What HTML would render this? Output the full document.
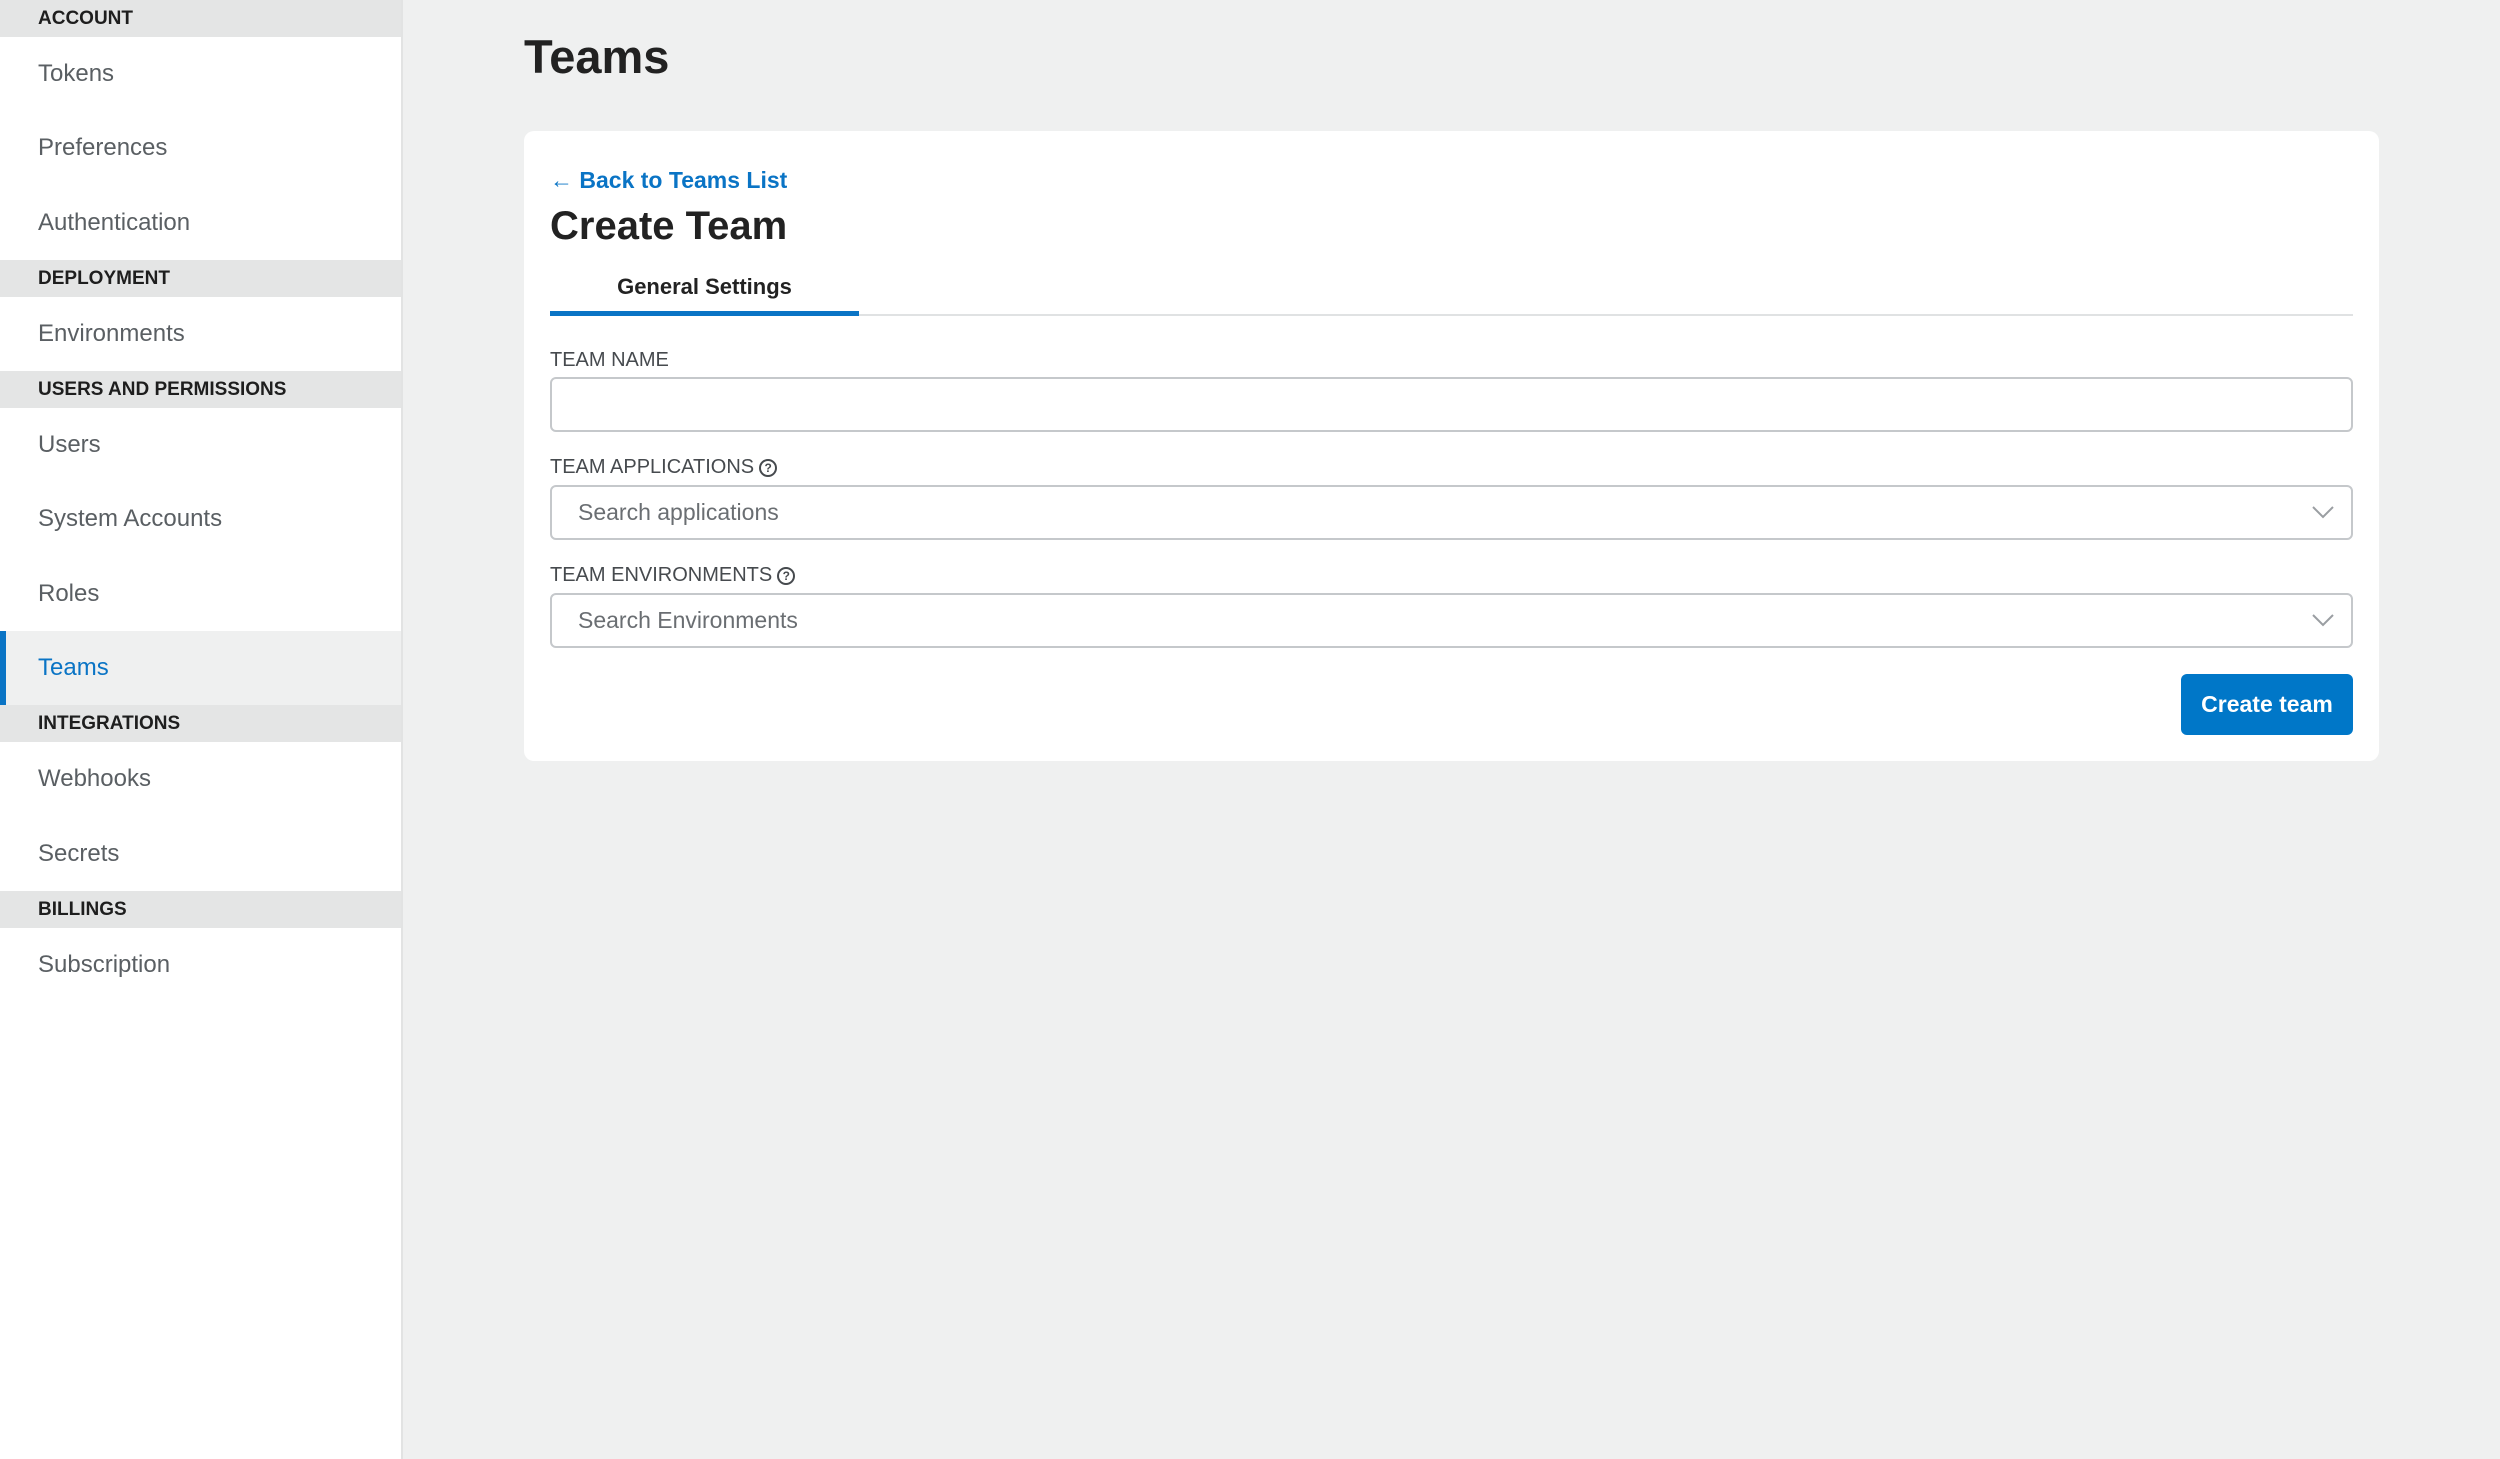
<!DOCTYPE html>
<html><head><meta charset="utf-8"><style>
*{box-sizing:border-box;margin:0;padding:0}
body{width:2500px;height:1459px;background:#eff0f0;font-family:"Liberation Sans",sans-serif;position:relative;overflow:hidden}
.sb{position:absolute;left:0;top:0;width:403px;height:1459px;background:#fff;border-right:2px solid #e2e3e3}
.h{height:37px;background:#e4e5e5;color:#1e1e1e;font-weight:bold;font-size:19px;line-height:37px;padding-left:38px}
.i{height:74.3px;line-height:74.3px;font-size:24px;color:#5a5f63;padding-left:38px}
.i.a{background:#eff0f0;color:#0a74c5;border-left:6px solid #0a74c5;padding-left:32px}
.abs{position:absolute}
.lbl{position:absolute;left:550px;font-size:20px;color:#464a4e;line-height:24px}
.box{position:absolute;left:550px;width:1803px;height:55px;border:2px solid #c5c8cb;border-radius:6px;background:#fff}
.ph{position:absolute;left:26px;top:0;line-height:51px;font-size:23px;color:#6a6e72}
.q{display:inline-block;width:18px;height:18px;border:2px solid #464a4e;border-radius:50%;font-size:12px;font-weight:bold;text-align:center;line-height:14px;vertical-align:1px;margin-left:5px}
</style></head><body>
<div class="sb">
<div class="h">ACCOUNT</div>
<div class="i">Tokens</div><div class="i">Preferences</div><div class="i">Authentication</div>
<div class="h">DEPLOYMENT</div>
<div class="i">Environments</div>
<div class="h">USERS AND PERMISSIONS</div>
<div class="i">Users</div><div class="i">System Accounts</div><div class="i">Roles</div><div class="i a">Teams</div>
<div class="h">INTEGRATIONS</div>
<div class="i">Webhooks</div><div class="i">Secrets</div>
<div class="h">BILLINGS</div>
<div class="i">Subscription</div>
</div>
<div class="abs" style="left:524px;top:30px;font-size:47px;font-weight:bold;color:#222;line-height:54px">Teams</div>
<div class="abs" style="left:524px;top:131px;width:1855px;height:630px;background:#fff;border-radius:10px"></div>
<div class="abs" style="left:550px;top:166px;font-size:23px;font-weight:bold;color:#0a74c5;line-height:28px">← Back to Teams List</div>
<div class="abs" style="left:550px;top:201px;font-size:40px;font-weight:bold;color:#222;line-height:50px">Create Team</div>
<div class="abs" style="left:550px;top:314px;width:1803px;height:2px;background:#e0e2e3"></div>
<div class="abs" style="left:550px;top:311px;width:309px;height:5px;background:#0a74c5"></div>
<div class="abs" style="left:550px;top:272px;width:309px;text-align:center;font-size:22px;font-weight:bold;color:#222;line-height:30px">General Settings</div>
<div class="lbl" style="top:348px">TEAM NAME</div>
<div class="box" style="top:377px"></div>
<div class="lbl" style="top:455px">TEAM APPLICATIONS<span class="q">?</span></div>
<div class="box" style="top:485px"><div class="ph">Search applications</div>
<svg class="abs" style="right:16px;top:17px" width="24" height="16"><path d="M2 3L12 13L22 3" fill="none" stroke="#9a9ea2" stroke-width="2"/></svg></div>
<div class="lbl" style="top:563px">TEAM ENVIRONMENTS<span class="q">?</span></div>
<div class="box" style="top:593px"><div class="ph">Search Environments</div>
<svg class="abs" style="right:16px;top:17px" width="24" height="16"><path d="M2 3L12 13L22 3" fill="none" stroke="#9a9ea2" stroke-width="2"/></svg></div>
<div class="abs" style="left:2181px;top:674px;width:172px;height:61px;background:#0077c8;border-radius:6px;color:#fff;font-size:23px;font-weight:bold;text-align:center;line-height:61px">Create team</div>
</body></html>
